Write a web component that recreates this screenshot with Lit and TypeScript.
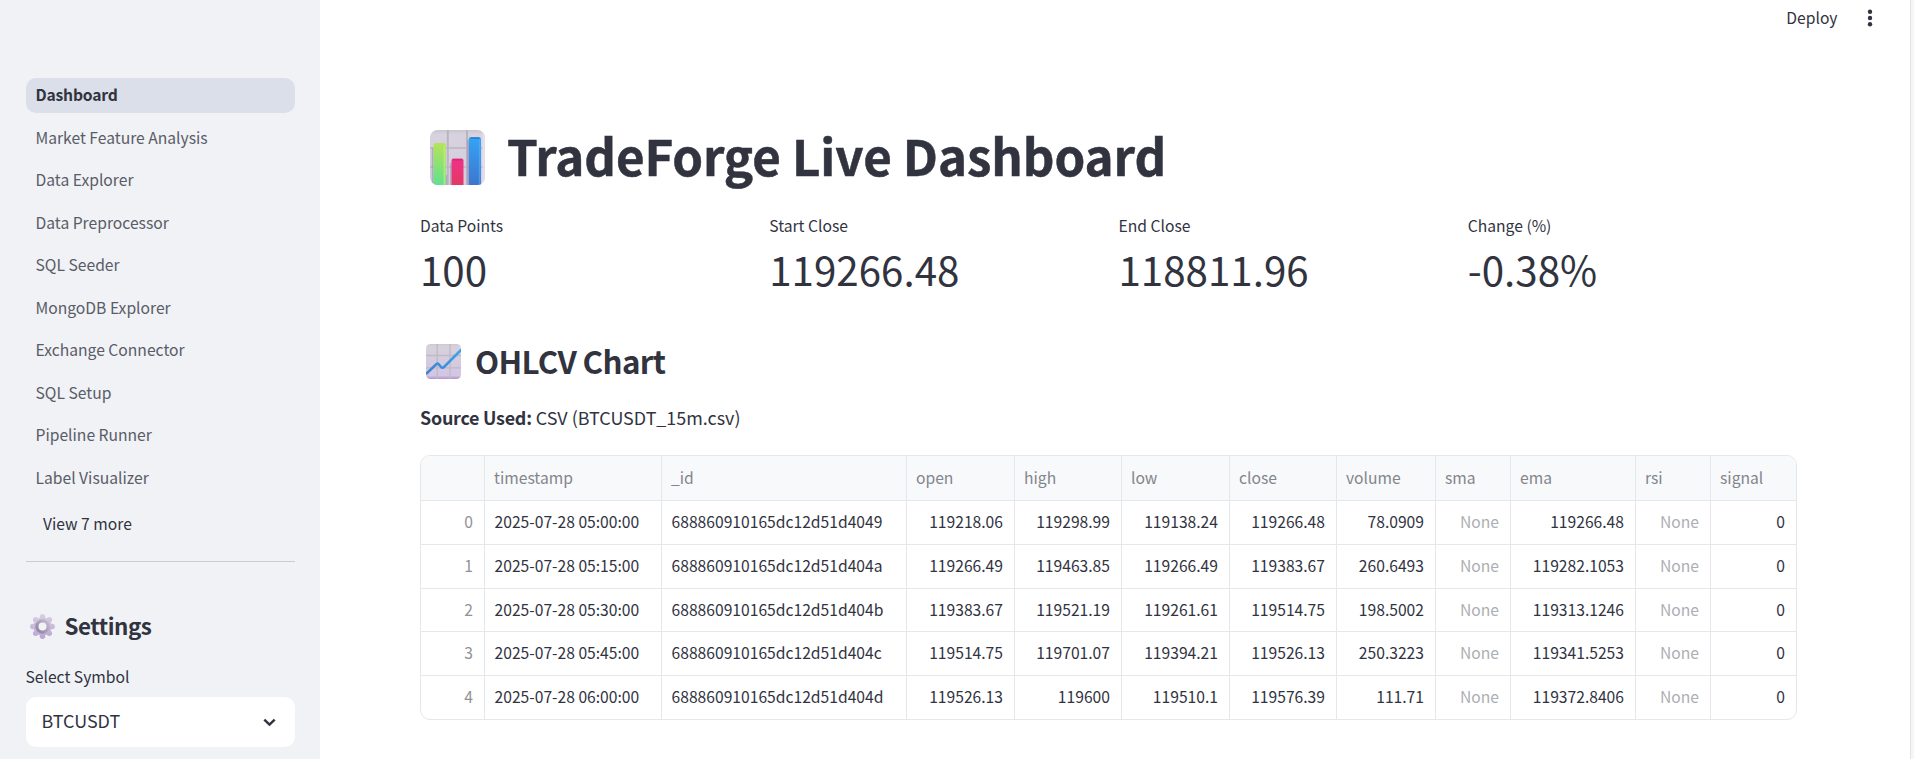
import { LitElement, html, css, svg } from "lit";
import { customElement, property } from "lit/decorators.js";
import { classMap } from "lit/directives/class-map.js";

const PAGES = [
  "Dashboard",
  "Market Feature Analysis",
  "Data Explorer",
  "Data Preprocessor",
  "SQL Seeder",
  "MongoDB Explorer",
  "Exchange Connector",
  "SQL Setup",
  "Pipeline Runner",
  "Label Visualizer",
];

const METRICS = [
  { label: "Data Points", value: "100" },
  { label: "Start Close", value: "119266.48" },
  { label: "End Close", value: "118811.96" },
  { label: "Change (%)", value: "-0.38%" },
];

const COLUMNS = ["", "timestamp", "_id", "open", "high", "low", "close", "volume", "sma", "ema", "rsi", "signal"];

const ROWS = [
  ["0", "2025-07-28 05:00:00", "688860910165dc12d51d4049", "119218.06", "119298.99", "119138.24", "119266.48", "78.0909", "None", "119266.48", "None", "0"],
  ["1", "2025-07-28 05:15:00", "688860910165dc12d51d404a", "119266.49", "119463.85", "119266.49", "119383.67", "260.6493", "None", "119282.1053", "None", "0"],
  ["2", "2025-07-28 05:30:00", "688860910165dc12d51d404b", "119383.67", "119521.19", "119261.61", "119514.75", "198.5002", "None", "119313.1246", "None", "0"],
  ["3", "2025-07-28 05:45:00", "688860910165dc12d51d404c", "119514.75", "119701.07", "119394.21", "119526.13", "250.3223", "None", "119341.5253", "None", "0"],
  ["4", "2025-07-28 06:00:00", "688860910165dc12d51d404d", "119526.13", "119600", "119510.1", "119576.39", "111.71", "None", "119372.8406", "None", "0"],
];

@customElement("side-bar")
class SideBar extends LitElement {
  static styles = css`
    :host {
      box-sizing: border-box;
      display: flex;
      flex-direction: column;
      width: 320px;
      height: 100%;
      padding: 78px 25px 0 26px;
      background: #f0f2f6;
      overflow: hidden;
    }
    .nav {
      display: flex;
      flex-direction: column;
      gap: 7.5px;
    }
    .item {
      box-sizing: border-box;
      height: 35px;
      padding: 0 9.5px 2px;
      border-radius: 10px;
      line-height: 33px;
      color: #5a5c66;
    }
    .active {
      background: #dadfe9;
      color: #31333f;
      font-weight: 600;
      letter-spacing: -0.2px;
    }
    .more {
      margin: 11.5px 0 0 17px;
      line-height: 33px;
    }
    .rule {
      height: 1px;
      margin-top: 21px;
      background: #cacccf;
    }
    .heading {
      display: flex;
      align-items: center;
      gap: 9.5px;
      margin-top: 46px;
      padding-left: 4px;
      height: 36px;
      font-size: 22.39px;
      font-weight: 600;
      line-height: 30px;
      letter-spacing: -0.45px;
    }
    .heading span {
      height: 32px;
    }
    .gear {
      width: 25px;
      height: 25px;
      flex: none;
    }
    .label {
      margin-top: 18px;
      line-height: 30px;
      text-indent: -0.5px;
    }
    .select {
      display: flex;
      align-items: center;
      justify-content: space-between;
      box-sizing: border-box;
      height: 50px;
      margin-top: 5px;
      padding: 0 19.5px 4px 15.5px;
      border-radius: 10px;
      background: #fff;
      font-size: 17.91px;
      line-height: 40px;
    }
    .chevron {
      width: 13px;
      height: 9px;
      margin-top: 4px;
    }
  `;

  render() {
    const teeth = [0, 45, 90, 135, 180, 225, 270, 315];
    return html`
      <nav class="nav">
        ${PAGES.map((p, i) => html`<div class=${classMap({ item: true, active: i === 0 })}>${p}</div>`)}
      </nav>
      <div class="more">View 7 more</div>
      <div class="rule"></div>
      <div class="heading">
        <svg class="gear" viewBox="0 0 25 25">
          <defs>
            <linearGradient id="g" gradientUnits="userSpaceOnUse" x1="0" y1="0" x2="0" y2="25">
              <stop offset="0" stop-color="#d8d0e2" />
              <stop offset="1" stop-color="#b9a5d2" />
            </linearGradient>
            <linearGradient id="h" x1="1" y1="0" x2="0" y2="1">
              <stop offset="0" stop-color="#c6bccd" />
              <stop offset="1" stop-color="#8f80a3" />
            </linearGradient>
          </defs>
          <g fill="url(#g)">
            <circle cx="12.5" cy="12.5" r="9.3" />
            ${teeth.map((a) => {
              const r = (a * Math.PI) / 180;
              return svg`<circle cx=${12.5 + 9.7 * Math.sin(r)} cy=${12.5 - 9.7 * Math.cos(r)} r="2.7" />`;
            })}
          </g>
          <circle cx="12.5" cy="12.5" r="5.6" fill="#f0f2f6" stroke="url(#h)" stroke-width="3.2" />
        </svg>
        <span>Settings</span>
      </div>
      <div class="label">Select Symbol</div>
      <div class="select">
        BTCUSDT
        <svg class="chevron" viewBox="0 0 13 9">
          <path d="M1.3 1.6 6.5 6.6 11.7 1.6" fill="none" stroke="#31333f" stroke-width="2.5" />
        </svg>
      </div>
    `;
  }
}

@customElement("metric-card")
class MetricCard extends LitElement {
  @property() label = "";
  @property() value = "";

  static styles = css`
    :host {
      display: block;
    }
    .label {
      line-height: 30px;
    }
    .value {
      font-size: 40.3px;
      line-height: 56px;
    }
  `;

  render() {
    return html`<div class="label">${this.label}</div>
      <div class="value">${this.value}</div>`;
  }
}

@customElement("data-grid")
class DataGrid extends LitElement {
  static styles = css`
    :host {
      display: block;
      box-sizing: border-box;
      width: 1377px;
      height: 265px;
      border: 1px solid #e6e7ea;
      border-radius: 10px;
      overflow: hidden;
    }
    .row {
      display: grid;
      grid-template-columns: 64px 177px 245px 108px 107px 108px 107px 99px 75px 125px 75px 85px;
      height: 43.75px;
    }
    .head {
      height: 45px;
      background: #f8f9fb;
    }
    .cell {
      box-sizing: border-box;
      padding: 0 11px 0 9.5px;
      border-right: 1px solid #e6e7ea;
      border-bottom: 1px solid #e6e7ea;
      line-height: 42px;
      text-align: right;
      white-space: nowrap;
    }
    .cell:last-child {
      border-right: 0;
    }
    .row:last-child .cell {
      border-bottom: 0;
    }
    .text {
      text-align: left;
    }
    .head .cell {
      padding-left: 9px;
      line-height: 44px;
      text-align: left;
      color: #83858c;
    }
    .index {
      color: #909298;
    }
    .none {
      color: #adaeb3;
    }
  `;

  render() {
    return html`
      <div class="row head">${COLUMNS.map((c) => html`<div class="cell">${c}</div>`)}</div>
      ${ROWS.map(
        (row) => html`<div class="row">
          ${row.map(
            (v, i) =>
              html`<div class=${classMap({ cell: true, index: i === 0, text: i === 1 || i === 2, none: v === "None" })}>${v}</div>`
          )}
        </div>`
      )}
    `;
  }
}

@customElement("app-root")
class AppRoot extends LitElement {
  static styles = css`
    :host {
      display: grid;
      grid-template-columns: 320px 1fr 4px;
      width: 100%;
      height: 759px;
      overflow: hidden;
      background: #fff;
      color: #31333f;
      font-family: "Noto Sans CJK SC", "Source Sans Pro", sans-serif;
      font-size: 15.67px;
    }
    .main {
      display: flex;
      flex-direction: column;
      min-width: 0;
    }
    .toolbar {
      display: flex;
      justify-content: flex-end;
      align-items: center;
      gap: 29.5px;
      height: 36px;
      padding-right: 37px;
      line-height: 36px;
    }
    .deploy {
      height: 36px;
    }
    .dots {
      width: 6px;
      height: 18px;
    }
    .content {
      display: flex;
      flex-direction: column;
      padding: 84px 112px 0 100px;
    }
    .title {
      display: flex;
      align-items: center;
      gap: 22px;
      height: 74px;
      padding-left: 10px;
      margin: 0;
      font-size: 49.25px;
      font-weight: 700;
      line-height: 70px;
      letter-spacing: -0.06px;
      -webkit-text-stroke: 0.5px #31333f;
    }
    .title span {
      height: 74px;
    }
    .bars {
      width: 55px;
      height: 55px;
      flex: none;
    }
    .metrics {
      display: grid;
      grid-template-columns: repeat(4, 349.25px);
      margin-top: 17px;
      height: 90px;
    }
    .subtitle {
      display: flex;
      align-items: center;
      gap: 14px;
      height: 49px;
      margin: 36px 0 0;
      padding-left: 6px;
      font-size: 31.34px;
      font-weight: 600;
      line-height: 48px;
      letter-spacing: -0.66px;
    }
    .subtitle span {
      height: 49px;
    }
    .trend {
      width: 35px;
      height: 35px;
      flex: none;
    }
    .source {
      margin-top: 16px;
      height: 53px;
      font-size: 17.91px;
      line-height: 30px;
    }
    .source b {
      font-weight: 600;
      letter-spacing: -0.24px;
    }
    .edge {
      background: #f6f6f7;
      border-left: 1px solid #e4e4e6;
    }
  `;

  render() {
    return html`
      <side-bar></side-bar>
      <div class="main">
        <div class="toolbar">
          <span class="deploy">Deploy</span>
          <svg class="dots" viewBox="0 0 6 18" fill="#31333f">
            <circle cx="3" cy="2.8" r="2.2" />
            <circle cx="3" cy="9" r="2.2" />
            <circle cx="3" cy="15.2" r="2.2" />
          </svg>
        </div>
        <div class="content">
          <h1 class="title">
            <svg class="bars" viewBox="0 0 55 55">
              <defs>
                <linearGradient id="bg" x1="0" y1="0" x2="0" y2="1">
                  <stop offset="0" stop-color="#c9c5cd" />
                  <stop offset="0.08" stop-color="#d8d2de" />
                  <stop offset="1" stop-color="#d7cce2" />
                </linearGradient>
                <linearGradient id="gr" x1="0" y1="0" x2="0" y2="1">
                  <stop offset="0" stop-color="#b4e35a" />
                  <stop offset="1" stop-color="#62e08e" />
                </linearGradient>
                <linearGradient id="rd" x1="0" y1="0" x2="0" y2="1">
                  <stop offset="0" stop-color="#f0308c" />
                  <stop offset="1" stop-color="#e13a62" />
                </linearGradient>
                <linearGradient id="bl" x1="0" y1="0" x2="0" y2="1">
                  <stop offset="0" stop-color="#36a3f5" />
                  <stop offset="1" stop-color="#3e76cc" />
                </linearGradient>
                <clipPath id="c"><rect width="55" height="55" rx="7.5" /></clipPath>
              </defs>
              <g clip-path="url(#c)">
                <rect width="55" height="55" fill="url(#bg)" />
                <path d="M17.8 0V55M37 0V55" stroke="#b9b5bf" stroke-width="2" />
                <path d="M0 18H55M0 37H55" stroke="#b9b5bf" stroke-width="1.6" />
                <path d="M53.6 0V55" stroke="#e6dfec" stroke-width="2.4" />
                <path d="M2.6 18V55M20.8 33V55M38 10V55M16.4 45V55" stroke="#9d90b3" stroke-width="1.6" opacity="0.6" />
                <path d="M3.4 55V15.5a2.5 2.5 0 0 1 2.5-2.5H13.4a2.5 2.5 0 0 1 2.5 2.5V55Z" fill="url(#gr)" />
                <path d="M14.5 15.5V55" stroke="#c6f36c" stroke-width="1.8" opacity="0.65" />
                <path d="M21.5 55V30.5a2 2 0 0 1 2-2H31.5a2 2 0 0 1 2 2V55Z" fill="url(#rd)" />
                <path d="M23 29.8H32" stroke="#c4336c" stroke-width="1.6" opacity="0.8" />
                <path d="M38.7 55V9.5a2.5 2.5 0 0 1 2.5-2.5H48.5a2.5 2.5 0 0 1 2.5 2.5V55Z" fill="url(#bl)" />
                <path d="M40.5 8.2H49.5" stroke="#2f78bd" stroke-width="1.6" opacity="0.8" />
                <path d="M49.6 10V55" stroke="#4fb9ff" stroke-width="1.6" opacity="0.55" />
              </g>
            </svg>
            <span>TradeForge Live Dashboard</span>
          </h1>
          <div class="metrics">
            ${METRICS.map((m) => html`<metric-card .label=${m.label} .value=${m.value}></metric-card>`)}
          </div>
          <h2 class="subtitle">
            <svg class="trend" viewBox="0 0 35 35">
              <defs>
                <linearGradient id="tb" x1="0" y1="0" x2="0" y2="1">
                  <stop offset="0" stop-color="#cdc9d0" />
                  <stop offset="0.08" stop-color="#d7d1dc" />
                  <stop offset="0.9" stop-color="#d3c5e4" />
                  <stop offset="1" stop-color="#b194c8" />
                </linearGradient>
                <linearGradient id="tl" x1="0" y1="1" x2="1" y2="0">
                  <stop offset="0" stop-color="#3b82cf" />
                  <stop offset="1" stop-color="#3aa6ee" />
                </linearGradient>
                <clipPath id="tc"><rect width="35" height="35" rx="4.5" /></clipPath>
              </defs>
              <g clip-path="url(#tc)">
                <rect width="35" height="35" fill="url(#tb)" />
                <path d="M11.2 0V35M24 0V35M0 11.5H35M0 23.8H35" stroke="#bfbac3" stroke-width="1.3" />
                <path d="M0 30 10.5 20Q11.5 19.2 12.5 20L15 23Q16.5 24.5 18 23L35.5 5.5" fill="none" stroke="url(#tl)" stroke-width="2.5" />
              </g>
            </svg>
            <span>OHLCV Chart</span>
          </h2>
          <div class="source"><b>Source Used:</b> CSV (BTCUSDT_15m.csv)</div>
          <data-grid></data-grid>
        </div>
      </div>
      <div class="edge"></div>
    `;
  }
}
